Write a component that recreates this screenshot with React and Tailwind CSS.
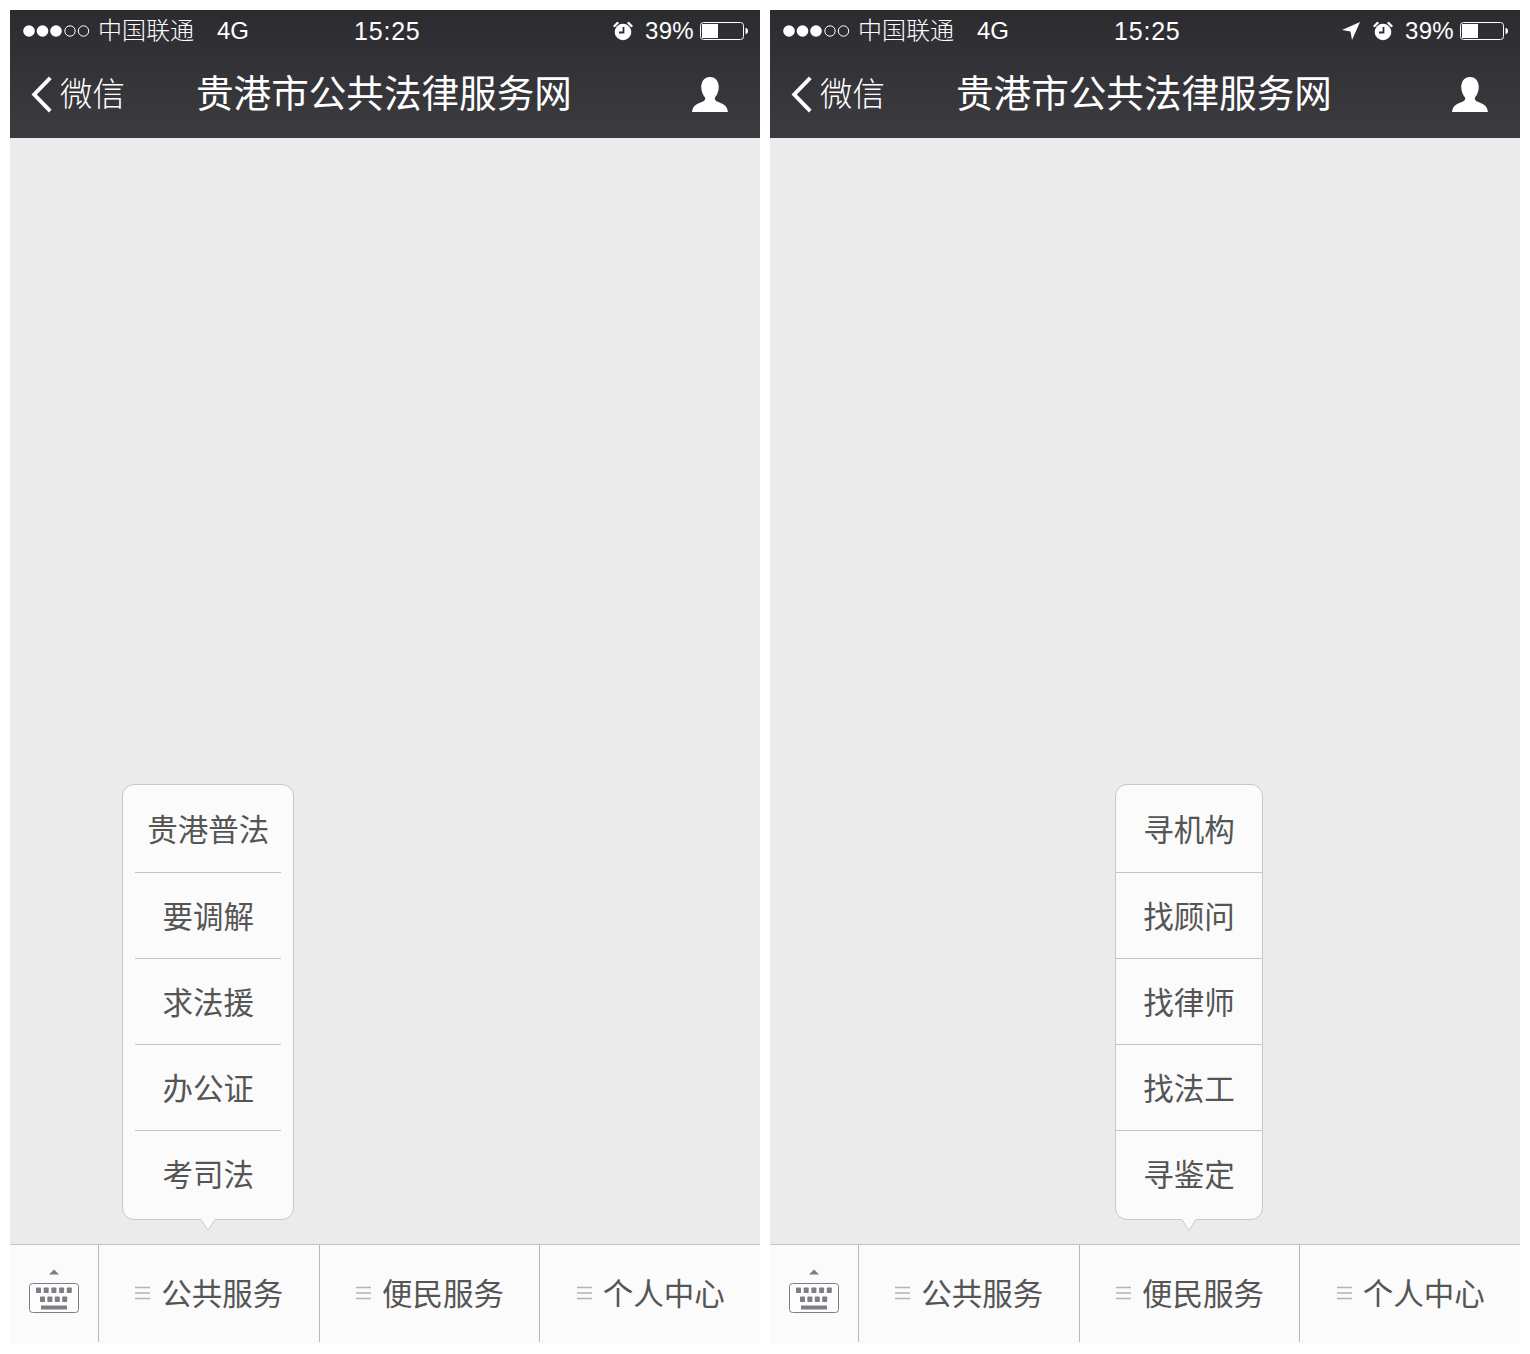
const menus = [
  { active: 0, width: "w-[172px]", dividerInset: "mx-3", items: ["贵港普法", "要调解", "求法援", "办公证", "考司法"] },
  { active: 1, width: "w-[148px]", dividerInset: "", items: ["寻机构", "找顾问", "找律师", "找法工", "寻鉴定"] },
];

const tabs = ["公共服务", "便民服务", "个人中心"];
const cjk = "font-['Noto_Sans_CJK_SC','Noto_Sans_CJK_JP',sans-serif]";

// first and last rows are taller, the padding keeps the labels 86px apart
const rowClass = (i) => {
  if (i === 0) return "h-[87px]";
  if (i === 4) return "h-[88px] pb-[3px]";
  return "h-[85px] pb-[1px]";
};

function Signal() {
  return (
    <svg width="68" height="14" viewBox="0 0 68 14" className="shrink-0">
      {[6, 19.5, 33].map((x) => <circle key={x} cx={x} cy="7" r="5.8" fill="#fff" />)}
      {[47, 60.5].map((x) => <circle key={x} cx={x} cy="7" r="5.2" fill="none" stroke="#fff" strokeWidth="1" />)}
    </svg>
  );
}

function Alarm() {
  return (
    <svg width="20" height="20" viewBox="0 0 20 20" className="shrink-0">
      <circle cx="10" cy="11" r="8.3" fill="#fff" />
      <path d="M1.5 5 L4.5 2 M18.5 5 L15.5 2" stroke="#fff" strokeWidth="2.4" strokeLinecap="round" />
      <path d="M10.5 6 V11.5 H6" stroke="#2f2f34" strokeWidth="1.8" fill="none" />
    </svg>
  );
}

function Battery() {
  return (
    <svg width="49" height="20" viewBox="0 0 49 20" className="shrink-0">
      <rect x="0.5" y="1.5" width="43" height="17" rx="3" fill="none" stroke="#fff" strokeWidth="1" />
      <rect x="2" y="3" width="16" height="14" fill="#fff" />
      <path d="M45.5 7 C47.5 7 48 8.5 48 10 C48 11.5 47.5 13 45.5 13 Z" fill="#fff" />
    </svg>
  );
}

function Person() {
  return (
    <svg width="36" height="35" viewBox="0 0 37 36" preserveAspectRatio="none" className="mb-[1px]">
      <path
        fill="#fff"
        d="M18.5 0 C24.5 0 27.5 4.5 27.5 10.5 C27.5 15 25.5 19 23.5 21 C23 23 24 24.5 27 25.7 C32 27.6 36 29 37 36 H0 C1 29 5 27.6 10 25.7 C13 24.5 14 23 13.5 21 C11.5 19 9.5 15 9.5 10.5 C9.5 4.5 12.5 0 18.5 0 Z"
      />
    </svg>
  );
}

function Keyboard() {
  const topRow = [8, 15.7, 23.4, 31.1, 38.8];
  const midRow = [12, 19.4, 26.8, 34.2];
  return (
    <svg width="52" height="46" viewBox="0 0 52 46">
      <path d="M21 5.5 L26 0.5 L31 5.5 Z" fill="#7c7e86" />
      <rect x="1.5" y="14.5" width="49" height="29" rx="3" fill="#fdfdfd" stroke="#7c7e86" strokeWidth="1" />
      {topRow.map((x) => <rect key={x} x={x} y="18.5" width="5" height="5.5" rx="0.8" fill="#7c7e86" />)}
      {midRow.map((x) => <rect key={x} x={x} y="27.5" width="5" height="5.5" rx="0.8" fill="#7c7e86" />)}
      <rect x="13" y="36.5" width="26" height="4" rx="0.5" fill="#7c7e86" />
    </svg>
  );
}

function Popup({ menu }) {
  return (
    <div className={`absolute bottom-full left-1/2 mb-[25px] -translate-x-1/2 ${menu.width} rounded-xl border border-[#c8c8c8] bg-[#fbfbfb]`}>
      {menu.items.map((item, i) => (
        <div key={item}>
          {i > 0 && <div className={`h-px bg-[#c4c4c4] ${menu.dividerInset}`} />}
          <div className={`flex ${rowClass(i)} items-center justify-center text-[30.5px] font-normal leading-none text-[#555555]`}>
            {item}
          </div>
        </div>
      ))}
      <svg width="15" height="12" viewBox="0 0 15 12" className="absolute left-1/2 top-full -translate-x-1/2">
        <path d="M0.5 0 H14.5 V1 L7.5 11.5 L0.5 1 Z" fill="#fbfbfb" />
        <path d="M0.5 0.5 L7.5 11.5 L14.5 0.5" fill="none" stroke="#c8c8c8" strokeWidth="1" />
      </svg>
    </div>
  );
}

function Phone({ menu, located }) {
  return (
    <div className={`flex h-[1334px] w-[750px] flex-col bg-[#ebebeb] ${cjk}`}>
      <header className="h-[128px] shrink-0 bg-[linear-gradient(180deg,#2c2c30_0%,#3b3b40_100%)] text-white">
        <div className="flex h-[42px] items-center pl-[13px] pr-[11px] text-[24px] leading-none">
          <Signal />
          <span className="ml-[7px] pb-[4px] font-light">中国联通</span>
          <span className="ml-[23px] font-['Liberation_Sans',sans-serif]">4G</span>
          <span className="ml-[105px] font-['Liberation_Sans',sans-serif] text-[25px] tracking-[0.8px]">15:25</span>
          <span className="flex-1" />
          {located && (
            <svg width="18" height="18" viewBox="0 0 18 18" className="mr-[13px] shrink-0">
              <path d="M18 0 L0 8 L8.5 9.5 L10 18 Z" fill="#fff" />
            </svg>
          )}
          <Alarm />
          <span className="ml-[12px] mr-[6px] font-['Liberation_Sans',sans-serif] tracking-[0.3px]">39%</span>
          <Battery />
        </div>
        <div className="flex h-[86px] items-center pl-[21px] pr-[32px]">
          <svg width="22" height="37" viewBox="0 0 22 38" className="mb-[1px] shrink-0">
            <path d="M19.5 2 L3 19 L19.5 36" fill="none" stroke="#fff" strokeWidth="4" />
          </svg>
          <span className="ml-[7px] pb-[5px] text-[32.5px] font-light leading-none">微信</span>
          <span className="ml-[71px] pb-[9px] text-[37.6px] leading-none">贵港市公共法律服务网</span>
          <span className="flex-1" />
          <Person />
        </div>
      </header>
      <main className="flex-1" />
      <nav className="flex h-[100px] shrink-0 border-t border-[#c4c4c4] bg-[#fbfbfb]">
        <div className="flex w-[88px] shrink-0 items-center justify-center pb-[6px]">
          <Keyboard />
        </div>
        {tabs.map((tab, i) => (
          <div key={tab} className="relative flex flex-1 items-center justify-center">
            <div className="absolute left-0 top-0 h-[97px] w-px bg-[#b8b8b8]" />
            <svg width="15" height="14" viewBox="0 0 15 14" className="mb-[4px] ml-[2px] mr-[11px] shrink-0">
              <path d="M0 1.5 H15 M0 7 H15 M0 12.5 H15" stroke="#b4b4b4" strokeWidth="1.5" />
            </svg>
            <span className="pb-[4px] text-[30.5px] font-normal leading-none text-[#555555]">{tab}</span>
            {menu.active === i && <Popup menu={menu} />}
          </div>
        ))}
      </nav>
    </div>
  );
}

export default function App() {
  return (
    <div className="flex min-h-[1354px] w-[1530px] gap-[10px] bg-white p-[10px]">
      <Phone menu={menus[0]} />
      <Phone menu={menus[1]} located />
    </div>
  );
}
